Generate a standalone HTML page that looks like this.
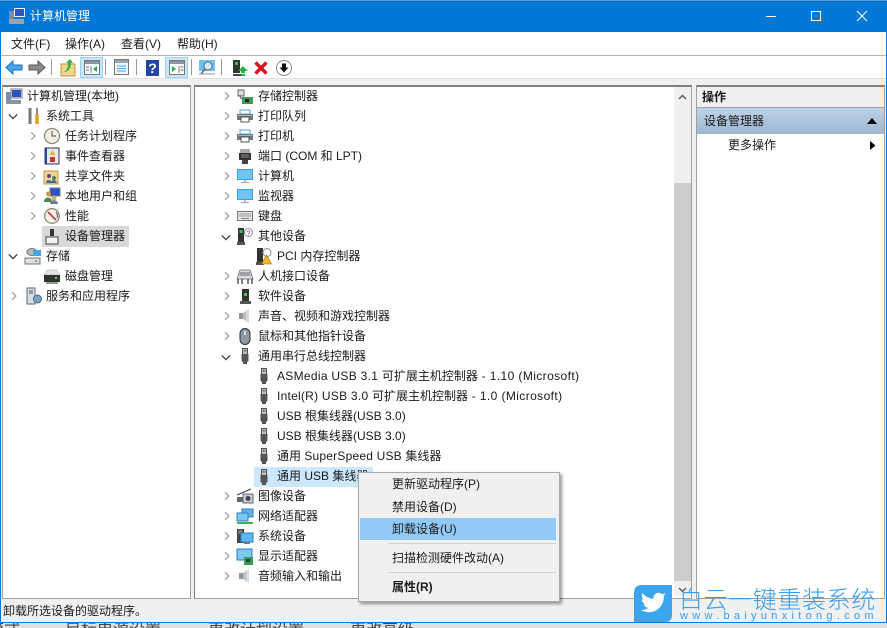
<!DOCTYPE html>
<html lang="zh"><head><meta charset="utf-8"><title>计算机管理</title>
<style>
html,body{margin:0;padding:0}
body{width:887px;height:628px;position:relative;overflow:hidden;background:#e0e0e0;font:12px/20px "Liberation Sans","Noto Sans CJK SC",sans-serif;color:#1a1a1a}
.a{position:absolute}
.t{position:absolute;white-space:nowrap;height:20px;line-height:20px}
.b{position:absolute;white-space:nowrap;height:20px;line-height:20px;top:-2px;font-size:16px;color:#444}
svg{position:absolute;overflow:visible}
</style></head><body>
<svg width="0" height="0" style="position:absolute"><defs>
<symbol id="r" viewBox="0 0 8 12"><path d="M1.500 1L6.500 6L1.500 11" fill="none" stroke="#a6a6a6" stroke-width="1.800"/></symbol>
<symbol id="d" viewBox="0 0 12 8"><path d="M1 1.500L6 6.500L11 1.500" fill="none" stroke="#404040" stroke-width="1.600"/></symbol>
<symbol id="usb" viewBox="0 0 16 16"><path d="M5.500 .5h5v6h-5z" fill="#bcbcbc" stroke="#505050"/><path d="M7 2h.8v1.500H7zM8.500 2h.8v1.500h-.8z" fill="#444"/><path d="M4.500 6h7v7l-1.500 1v2H6v-2l-1.500-1z" fill="#555"/></symbol>
<symbol id="mon" viewBox="0 0 16 16"><rect x="0" y="1" width="16" height="11" fill="#3aa0e4"/><rect x="1" y="2" width="14" height="9" fill="#74c4f2"/><path d="M4 14h8v1H4z" fill="#9aa6b0"/><path d="M7 12h2v2H7z" fill="#b5c0c8"/></symbol>
<symbol id="prn" viewBox="0 0 16 16"><rect x="3" y="2" width="10" height="4" fill="#fff" stroke="#4aa3dd"/><rect x="0" y="6" width="16" height="6" fill="#6f7881"/><rect x="1" y="7" width="14" height="1" fill="#aab2ba"/><rect x="4" y="9" width="8" height="5" fill="#fff" stroke="#555"/></symbol>
<symbol id="spk" viewBox="0 0 16 16"><path d="M2 5h4v6H2z" fill="#8f979b"/><path d="M6 5l6-4v14l-6-4z" fill="#b9bfc2"/><path d="M9 3l3-2v14l-3-2z" fill="#d6dadc"/></symbol>
</defs></svg>

<!-- window chrome -->
<div class="a" style="left:0;top:0;width:887px;height:1px;background:#5a9ad8"></div>
<div class="a" style="left:0;top:1px;width:887px;height:31px;background:#0078d7"></div>
<div class="a" style="left:0;top:32px;width:887px;height:591px;background:#f0f0f0"></div>
<div class="a" style="left:0;top:32px;width:1px;height:591px;background:#0078d7"></div>
<div class="a" style="left:886px;top:32px;width:1px;height:591px;background:#0078d7"></div>
<div class="a" style="left:1px;top:32px;width:885px;height:23px;background:#fff"></div>
<div class="a" style="left:1px;top:55px;width:885px;height:1px;background:#b4b4b4"></div>
<div class="a" style="left:1px;top:56px;width:885px;height:22px;background:#fff"></div>
<div class="a" style="left:1px;top:78px;width:885px;height:1px;background:#e0e0e0"></div>

<svg style="left:9px;top:8px" width="16" height="16" viewBox="0 0 16 16"><rect x="5" y="0" width="11" height="9" fill="#e8eef5"/><rect x="6" y="1" width="9" height="7" fill="#2a55c0"/><rect x="0" y="3" width="5" height="8" fill="#7b8ea3"/><rect x="0" y="11" width="15" height="5" fill="#9aa4ae"/></svg>
<div class="t" style="left:30px;top:6px;color:#fff">计算机管理</div>
<div class="a" style="left:766px;top:16px;width:10px;height:1px;background:#fff"></div>
<div class="a" style="left:811px;top:11px;width:8px;height:8px;border:1px solid #fff"></div>
<svg style="left:857px;top:11px" width="10" height="10" viewBox="0 0 10 10"><path d="M0 0L10 10M10 0L0 10" stroke="#fff" stroke-width="1"/></svg>

<div class="t" style="left:11px;top:34px">文件(F)</div>
<div class="t" style="left:65px;top:34px">操作(A)</div>
<div class="t" style="left:121px;top:34px">查看(V)</div>
<div class="t" style="left:177px;top:34px">帮助(H)</div>

<!-- toolbar -->
<div class="a" style="left:80px;top:57px;width:21px;height:19px;background:#cce8ff;border:1px solid #99d1ff"></div>
<div class="a" style="left:165px;top:57px;width:21px;height:19px;background:#cce8ff;border:1px solid #99d1ff"></div>
<div class="a" style="left:51px;top:59px;width:1px;height:16px;background:#999"></div>
<div class="a" style="left:105px;top:59px;width:1px;height:16px;background:#999"></div>
<div class="a" style="left:136px;top:59px;width:1px;height:16px;background:#999"></div>
<div class="a" style="left:191px;top:59px;width:1px;height:16px;background:#999"></div>
<div class="a" style="left:221px;top:59px;width:1px;height:16px;background:#999"></div>
<svg style="left:6px;top:60px" width="16" height="15" viewBox="0 0 16 15"><path d="M0 7.500L7 1v4h9v5H7v4z" fill="#4aa6ea" stroke="#1f6fb8"/></svg>
<svg style="left:29px;top:60px" width="16" height="15" viewBox="0 0 16 15"><path d="M16 7.500L9 1v4H0v5h9v4z" fill="#8c8c8c" stroke="#555"/></svg>
<svg style="left:61px;top:59px" width="14" height="17" viewBox="0 0 14 17"><path d="M0 5h14v12H0z" fill="#f0d78c" stroke="#b79a50"/><path d="M3 13C6 11 7 8 7 4H5l4-4 3 4h-2c0 5-2 8-6 9z" fill="#35b24a"/></svg>
<svg style="left:84px;top:60px" width="16" height="15" viewBox="0 0 16 15"><rect x=".5" y=".5" width="15" height="14" fill="#fff" stroke="#777"/><rect x="1" y="1" width="14" height="3" fill="#8a96a5"/><path d="M7 6v7" stroke="#777"/><path d="M2 7h3M2 10h3" stroke="#667"/><path d="M13 6v6l-4-3z" fill="#2fa84f"/></svg>
<svg style="left:114px;top:59px" width="15" height="16" viewBox="0 0 15 16"><rect x=".5" y=".5" width="14" height="15" fill="#f4f6f8" stroke="#777"/><rect x="1" y="1" width="13" height="3" fill="#9aa4b0"/><path d="M3 7h9M3 9.500h9M3 12h9" stroke="#5aa0d8"/></svg>
<div class="a" style="left:146px;top:60px;width:13px;height:16px;background:#2244a8;color:#fff;font:bold 14px/16px 'Liberation Sans',sans-serif;text-align:center">?</div>
<svg style="left:169px;top:60px" width="16" height="15" viewBox="0 0 16 15"><rect x=".5" y=".5" width="15" height="14" fill="#fff" stroke="#777"/><rect x="1" y="1" width="14" height="3" fill="#8a96a5"/><path d="M10 6v7" stroke="#777"/><path d="M11.500 7h3M11.500 10h3" stroke="#667"/><path d="M3 6v6l4-3z" fill="#2fa84f"/></svg>
<svg style="left:199px;top:60px" width="16" height="16" viewBox="0 0 16 16"><rect x="0" y="0" width="16" height="11" fill="#6cc0ee"/><circle cx="9" cy="6" r="4" fill="#d6eefa" stroke="#667"/><path d="M6 9L2 14" stroke="#667" stroke-width="1.500"/><path d="M0 14h16" stroke="#8a96a5"/></svg>
<svg style="left:233px;top:60px" width="15" height="16" viewBox="0 0 15 16"><rect x="0" y="0" width="7" height="13" fill="#333"/><rect x="2" y="2" width="3" height="3" fill="#39c24a"/><rect x="0" y="14" width="8" height="2" fill="#444"/><path d="M10 6l5 5h-3v2H8v-2H5z" fill="#28b04a"/><path d="M8 14h4v2H8z" fill="#28b04a"/></svg>
<svg style="left:254px;top:61px" width="14" height="14" viewBox="0 0 14 14"><path d="M1.500 1.500L12.500 12.500M12.500 1.500L1.500 12.500" stroke="#d9141e" stroke-width="3.400"/></svg>
<svg style="left:276px;top:60px" width="16" height="16" viewBox="0 0 16 16"><circle cx="8" cy="8" r="7.500" fill="#fff" stroke="#888"/><path d="M6 3.500h4v4h2.500L8 12.500 3.500 7.500H6z" fill="#111"/></svg>

<!-- panes -->
<div class="a" style="left:2px;top:85px;width:187px;height:511px;background:#fff;border:1px solid #a0a0a0;border-top:2px solid #7f7f7f"></div>
<div class="a" style="left:194px;top:85px;width:496px;height:511px;background:#fff;border:1px solid #a0a0a0;border-top:2px solid #7f7f7f;border-left:1px solid #7f7f7f"></div>
<div class="a" style="left:696px;top:85px;width:187px;height:511px;background:#fff;border:1px solid #a0a0a0;border-top:2px solid #7f7f7f"></div>

<!-- scrollbar -->
<div class="a" style="left:674px;top:87px;width:17px;height:509px;background:#f0f0f0"></div>
<div class="a" style="left:674px;top:183px;width:17px;height:398px;background:#cdcdcd"></div>
<svg style="left:678px;top:94px" width="9" height="6" viewBox="0 0 9 6"><path d="M1 5L4.500 1.500L8 5" fill="none" stroke="#606060" stroke-width="1.500"/></svg>
<svg style="left:678px;top:587px" width="9" height="6" viewBox="0 0 9 6"><path d="M1 1L4.500 4.500L8 1" fill="none" stroke="#606060" stroke-width="1.500"/></svg>

<!-- left tree -->
<svg style="left:6px;top:89px" width="16" height="16" viewBox="0 0 16 16"><rect x="5" y="0" width="11" height="9" fill="#e8eef5" stroke="#778"/><rect x="6" y="1" width="9" height="7" fill="#2a55c0"/><rect x="0" y="3" width="5" height="8" fill="#7b8ea3"/><rect x="0" y="11" width="15" height="4" fill="#8a94a0"/></svg>
<div class="t" style="left:27px;top:86px">计算机管理(本地)</div>
<svg style="left:8px;top:113px" width="10" height="7"><use href="#d"/></svg>
<svg style="left:27px;top:108px" width="14" height="16" viewBox="0 0 14 16"><path d="M3 0v6M3 6v10" stroke="#777" stroke-width="3"/><path d="M10 0v7" stroke="#888" stroke-width="2"/><path d="M10 6v10" stroke="#d9a020" stroke-width="3.500"/></svg>
<div class="t" style="left:46px;top:106px">系统工具</div>

<svg style="left:30px;top:131px" width="6" height="10"><use href="#r"/></svg>
<svg style="left:44px;top:128px" width="16" height="16" viewBox="0 0 16 16"><circle cx="8" cy="8" r="7.500" fill="#f2f0e4" stroke="#8a8a80" stroke-width="1.300"/><path d="M8 3v5h4" fill="none" stroke="#666" stroke-width="1.200"/></svg>
<div class="t" style="left:65px;top:126px">任务计划程序</div>

<svg style="left:30px;top:151px" width="6" height="10"><use href="#r"/></svg>
<svg style="left:45px;top:148px" width="14" height="16" viewBox="0 0 14 16"><rect x="0" y="0" width="14" height="16" fill="#e6e9ee" stroke="#335"/><path d="M0 0h2v16H0z" fill="#2a4a90"/><path d="M7.500 2l3 5h-6z" fill="#e8b820"/><rect x="5" y="9" width="5" height="5" fill="#c8343a"/></svg>
<div class="t" style="left:65px;top:146px">事件查看器</div>

<svg style="left:30px;top:171px" width="6" height="10"><use href="#r"/></svg>
<svg style="left:44px;top:168px" width="15" height="16" viewBox="0 0 15 16"><path d="M0 3h14v13H0z" fill="#efd693" stroke="#b89a50"/><circle cx="5" cy="8" r="2" fill="#647"/><circle cx="10" cy="10" r="2" fill="#486"/><path d="M2 15c0-4 5-4 6 0M7 15c0-4 5-4 6 0" fill="#4a6a88"/></svg>
<div class="t" style="left:65px;top:166px">共享文件夹</div>

<svg style="left:30px;top:191px" width="6" height="10"><use href="#r"/></svg>
<svg style="left:44px;top:188px" width="16" height="16" viewBox="0 0 16 16"><rect x="6" y="0" width="10" height="8" fill="#2a55c0" stroke="#778"/><circle cx="4.500" cy="6" r="2.500" fill="#c69a50"/><path d="M0 14c0-6 8-6 8 0z" fill="#4a8a4a"/><circle cx="10" cy="10" r="2.500" fill="#d8a870"/><path d="M6 16c0-5 8-5 8 0z" fill="#6a7f9a"/></svg>
<div class="t" style="left:65px;top:186px">本地用户和组</div>

<svg style="left:30px;top:211px" width="6" height="10"><use href="#r"/></svg>
<svg style="left:44px;top:208px" width="16" height="16" viewBox="0 0 16 16"><circle cx="8" cy="8" r="7.300" fill="#f6f3e8" stroke="#8a8a80" stroke-width="1.300"/><path d="M4 4L12 12" stroke="#c8343a" stroke-width="1.600"/><path d="M12 4A6 6 0 0 1 13 10" fill="none" stroke="#4a4a8a"/></svg>
<div class="t" style="left:65px;top:206px">性能</div>

<div class="a" style="left:42px;top:226px;width:87px;height:21px;background:#d9d9d9"></div>
<svg style="left:45px;top:229px" width="14" height="16" viewBox="0 0 14 16"><rect x="5" y="0" width="4" height="7" fill="#333"/><rect x="1" y="8" width="12" height="7" fill="#f4f4f4" stroke="#444"/></svg>
<div class="t" style="left:65px;top:226px">设备管理器</div>

<svg style="left:8px;top:253px" width="10" height="7"><use href="#d"/></svg>
<svg style="left:25px;top:248px" width="16" height="17" viewBox="0 0 16 17"><ellipse cx="7" cy="4" rx="5" ry="3.500" fill="#b8bcbc" stroke="#777"/><rect x="8" y="2" width="8" height="6" fill="#42a5e0"/><rect x="0" y="10" width="15" height="6" fill="#ddd" stroke="#777"/><circle cx="11" cy="13" r="1" fill="#39c24a"/></svg>
<div class="t" style="left:46px;top:246px">存储</div>

<svg style="left:44px;top:270px" width="16" height="14" viewBox="0 0 16 14"><path d="M3 0h10l3 5H0z" fill="#e4e4e4" stroke="#aaa" stroke-width=".5"/><rect x="0" y="5" width="16" height="7" fill="#333"/><rect x="11" y="7" width="2" height="2" fill="#39e24a"/><rect x="2" y="12" width="12" height="2" fill="#999"/></svg>
<div class="t" style="left:65px;top:266px">磁盘管理</div>

<svg style="left:11px;top:291px" width="6" height="10"><use href="#r"/></svg>
<svg style="left:27px;top:288px" width="15" height="16" viewBox="0 0 15 16"><rect x="0" y="0" width="8" height="16" fill="#d8dde2" stroke="#667"/><path d="M2 3h4M2 5h4" stroke="#556"/><circle cx="10.500" cy="11" r="4" fill="#7ba4c8" stroke="#4a6a8a"/></svg>
<div class="t" style="left:46px;top:286px">服务和应用程序</div>

<!-- middle tree -->
<svg style="left:224px;top:91px" width="6" height="10"><use href="#r"/></svg>
<svg style="left:237px;top:89px" width="16" height="16" viewBox="0 0 16 16"><path d="M1 1h6v6H1z" fill="#ddd" stroke="#666"/><path d="M3 6c0 4 3 5 6 4" fill="none" stroke="#555"/><rect x="5" y="8" width="11" height="7" fill="#3f9a5a"/><rect x="8" y="10" width="4" height="3" fill="#222"/></svg>
<div class="t" style="left:258px;top:86px">存储控制器</div>

<svg style="left:224px;top:111px" width="6" height="10"><use href="#r"/></svg>
<svg style="left:237px;top:108px" width="16" height="16"><use href="#prn"/></svg>
<div class="t" style="left:258px;top:106px">打印队列</div>

<svg style="left:224px;top:131px" width="6" height="10"><use href="#r"/></svg>
<svg style="left:237px;top:128px" width="16" height="16"><use href="#prn"/></svg>
<div class="t" style="left:258px;top:126px">打印机</div>

<svg style="left:224px;top:151px" width="6" height="10"><use href="#r"/></svg>
<svg style="left:239px;top:149px" width="12" height="15" viewBox="0 0 12 15"><rect x="1" y="0" width="10" height="4" fill="#aaa"/><rect x="0" y="4" width="12" height="7" fill="#333"/><path d="M2 6h8M2 8h8" stroke="#888"/><rect x="3" y="11" width="6" height="4" fill="#444"/></svg>
<div class="t" style="left:258px;top:146px">端口 (COM 和 LPT)</div>

<svg style="left:224px;top:171px" width="6" height="10"><use href="#r"/></svg>
<svg style="left:237px;top:168px" width="16" height="16"><use href="#mon"/></svg>
<div class="t" style="left:258px;top:166px">计算机</div>

<svg style="left:224px;top:191px" width="6" height="10"><use href="#r"/></svg>
<svg style="left:237px;top:188px" width="16" height="16"><use href="#mon"/></svg>
<div class="t" style="left:258px;top:186px">监视器</div>

<svg style="left:224px;top:211px" width="6" height="10"><use href="#r"/></svg>
<svg style="left:237px;top:211px" width="16" height="10" viewBox="0 0 16 10"><rect x=".5" y=".5" width="15" height="9" fill="#e4e6e8" stroke="#777"/><path d="M2 3h12M2 5h12" stroke="#999"/><path d="M4 7.500h8" stroke="#888"/></svg>
<div class="t" style="left:258px;top:206px">键盘</div>

<svg style="left:221px;top:234px" width="10" height="7"><use href="#d"/></svg>
<svg style="left:237px;top:228px" width="16" height="17" viewBox="0 0 16 17"><rect x="1" y="0" width="6" height="14" fill="#333"/><rect x="2.500" y="2" width="3" height="3" fill="#39c24a"/><rect x="0" y="14" width="8" height="3" fill="#555"/><circle cx="11.500" cy="4.500" r="4" fill="#fff" stroke="#88a"/><text x="11.500" y="7.500" font-size="7" text-anchor="middle" fill="#557" font-family="Liberation Sans">?</text></svg>
<div class="t" style="left:258px;top:226px">其他设备</div>

<svg style="left:256px;top:248px" width="16" height="17" viewBox="0 0 16 17"><rect x="1" y="0" width="6" height="14" fill="#333"/><rect x="0" y="14" width="8" height="3" fill="#555"/><circle cx="11" cy="4.500" r="4" fill="#fff" stroke="#88a"/><path d="M10.500 7l5 9h-10z" fill="#f2b824" stroke="#8a6a10" stroke-width=".6"/></svg>
<div class="t" style="left:277px;top:246px">PCI 内存控制器</div>

<svg style="left:224px;top:271px" width="6" height="10"><use href="#r"/></svg>
<svg style="left:237px;top:269px" width="16" height="16" viewBox="0 0 16 16"><path d="M3 1h10l3 9H0z" fill="#d8dce0" stroke="#667" stroke-width=".8"/><path d="M3 4h10M2.500 6h11" stroke="#667"/><path d="M1 10v5M5 10v5M11 10v5M15 10v5" stroke="#555" stroke-width="1.500"/></svg>
<div class="t" style="left:258px;top:266px">人机接口设备</div>

<svg style="left:224px;top:291px" width="6" height="10"><use href="#r"/></svg>
<svg style="left:240px;top:289px" width="11" height="15" viewBox="0 0 11 15"><rect x="2" y="0" width="7" height="12" fill="#333"/><rect x="4" y="4" width="3" height="3" fill="#39d24a"/><rect x="0" y="12" width="11" height="3" fill="#555"/></svg>
<div class="t" style="left:258px;top:286px">软件设备</div>

<svg style="left:224px;top:311px" width="6" height="10"><use href="#r"/></svg>
<svg style="left:237px;top:308px" width="16" height="16"><use href="#spk"/></svg>
<div class="t" style="left:258px;top:306px">声音、视频和游戏控制器</div>

<svg style="left:224px;top:331px" width="6" height="10"><use href="#r"/></svg>
<svg style="left:239px;top:328px" width="12" height="17" viewBox="0 0 12 17"><rect x="1" y=".5" width="10" height="16" rx="5" fill="#8e99a3" stroke="#333"/><path d="M6 3v4" stroke="#eee" stroke-width="1.500"/></svg>
<div class="t" style="left:258px;top:326px">鼠标和其他指针设备</div>

<svg style="left:221px;top:354px" width="10" height="7"><use href="#d"/></svg>
<svg style="left:237px;top:348px" width="16" height="16"><use href="#usb"/></svg>
<div class="t" style="left:258px;top:346px">通用串行总线控制器</div>

<svg style="left:256px;top:368px" width="16" height="16"><use href="#usb"/></svg>
<div class="t" style="left:277px;top:366px"><span style="letter-spacing:.3px">ASMedia USB 3.1 </span>可扩展主机控制器<span style="letter-spacing:.4px"> - 1.10 (Microsoft)</span></div>
<svg style="left:256px;top:388px" width="16" height="16"><use href="#usb"/></svg>
<div class="t" style="left:277px;top:386px"><span style="letter-spacing:.25px">Intel(R) USB 3.0 </span>可扩展主机控制器<span style="letter-spacing:.4px"> - 1.0 (Microsoft)</span></div>
<svg style="left:256px;top:408px" width="16" height="16"><use href="#usb"/></svg>
<div class="t" style="left:277px;top:406px">USB 根集线器(USB 3.0)</div>
<svg style="left:256px;top:428px" width="16" height="16"><use href="#usb"/></svg>
<div class="t" style="left:277px;top:426px">USB 根集线器(USB 3.0)</div>
<svg style="left:256px;top:448px" width="16" height="16"><use href="#usb"/></svg>
<div class="t" style="left:277px;top:446px">通用 <span style="letter-spacing:.2px">SuperSpeed USB </span>集线器</div>

<div class="a" style="left:254px;top:467px;width:119px;height:20px;background:#cce8ff"></div>
<svg style="left:256px;top:469px" width="16" height="16"><use href="#usb"/></svg>
<div class="t" style="left:277px;top:466px">通用 USB 集线器</div>

<svg style="left:224px;top:491px" width="6" height="10"><use href="#r"/></svg>
<svg style="left:237px;top:489px" width="16" height="15" viewBox="0 0 16 15"><path d="M0 6L14 0" stroke="#444" stroke-width="1.200"/><path d="M0 8h6v5H0z" fill="#666"/><rect x="6" y="5" width="10" height="9" fill="#c8ccd0" stroke="#667"/><circle cx="11" cy="9.500" r="2.500" fill="#445"/></svg>
<div class="t" style="left:258px;top:486px">图像设备</div>

<svg style="left:224px;top:511px" width="6" height="10"><use href="#r"/></svg>
<svg style="left:237px;top:509px" width="16" height="16" viewBox="0 0 16 16"><rect x="5" y="0" width="11" height="8" fill="#5cb3e8" stroke="#2f80c0"/><rect x="0" y="4" width="11" height="8" fill="#7cc8f2" stroke="#2f80c0"/><path d="M0 14h16" stroke="#3ab54a" stroke-width="2"/></svg>
<div class="t" style="left:258px;top:506px">网络适配器</div>

<svg style="left:224px;top:531px" width="6" height="10"><use href="#r"/></svg>
<svg style="left:237px;top:529px" width="16" height="15" viewBox="0 0 16 15"><rect x="0" y="0" width="7" height="14" fill="#444"/><path d="M1.500 2h4M1.500 4h4" stroke="#bbb"/><rect x="4" y="4" width="12" height="9" fill="#5cb8ee" stroke="#2f80c0"/><path d="M7 14h6" stroke="#778" stroke-width="2"/></svg>
<div class="t" style="left:258px;top:526px">系统设备</div>

<svg style="left:224px;top:551px" width="6" height="10"><use href="#r"/></svg>
<svg style="left:237px;top:549px" width="16" height="16" viewBox="0 0 16 16"><rect x="0" y="0" width="15" height="11" fill="#7cc8f2" stroke="#2f80c0"/><rect x="7" y="8" width="9" height="8" fill="#3f9a5a"/><rect x="9" y="10" width="4" height="3" fill="#1a4a2a"/></svg>
<div class="t" style="left:258px;top:546px">显示适配器</div>

<svg style="left:224px;top:571px" width="6" height="10"><use href="#r"/></svg>
<svg style="left:237px;top:568px" width="16" height="16"><use href="#spk"/></svg>
<div class="t" style="left:258px;top:566px">音频输入和输出</div>

<!-- action pane -->
<div class="a" style="left:697px;top:87px;width:187px;height:20px;background:#f0f0f0"></div>
<div class="a" style="left:697px;top:107px;width:187px;height:1px;background:#a0a0a0"></div>
<div class="t" style="left:702px;top:87px;font-weight:bold">操作</div>
<div class="a" style="left:697px;top:108px;width:187px;height:26px;background:linear-gradient(#bdd3e8,#9db6d2)"></div>
<div class="t" style="left:704px;top:111px">设备管理器</div>
<svg style="left:867px;top:118px" width="10" height="6" viewBox="0 0 10 6"><path d="M0 6L5 0L10 6z" fill="#000"/></svg>
<div class="t" style="left:728px;top:135px">更多操作</div>
<svg style="left:870px;top:141px" width="6" height="9" viewBox="0 0 6 9"><path d="M0 0L5.500 4.500L0 9z" fill="#000"/></svg>

<!-- status bar -->
<div class="t" style="left:3px;top:601px">卸载所选设备的驱动程序。</div>
<div class="a" style="left:0;top:622px;width:887px;height:1px;background:#0078d7"></div>
<div class="a" style="left:0;top:623px;width:887px;height:5px;background:#e0e0e0;overflow:hidden">
<div class="b" style="left:-12px">模式</div>
<div class="b" style="left:36px">--</div>
<div class="b" style="left:65px">目标电源设置</div>
<div class="b" style="left:178px">--</div>
<div class="b" style="left:208px">更改计划设置</div>
<div class="b" style="left:320px">--</div>
<div class="b" style="left:350px">更改高级</div>
</div>

<!-- watermark -->
<svg style="left:634px;top:585px" width="38" height="38" viewBox="0 0 38 38"><path d="M8 0H38V30Q38 37 31 37H0V8Q0 0 8 0z" fill="#3da5f0"/><path d="M31 12c-1 .6-2 .8-3 1 1-.6 2-1.600 2.300-3-1 .6-2 1-3.200 1.300a5 5 0 0 0-8.500 4.500C14 15.500 10 13.500 7.500 10c-1.300 2.300-.7 5 1.500 6.600-.8 0-1.600-.2-2.300-.6 0 2.500 1.800 4.600 4.200 5.100-.8.200-1.500.2-2.300.1.700 2 2.600 3.500 4.800 3.500-2.200 1.700-5 2.500-7.600 2.200 2.300 1.400 5 2.300 8 2.300 9.500 0 15-8 15-15v-.7c1-.7 2-1.700 2.700-2z" fill="#fff" transform="translate(1 -2)"/></svg>
<div class="t" style="left:679px;top:584px;height:28px;line-height:28px;font-size:24px;letter-spacing:.6px;color:#3d9ce8;font-family:'Noto Sans CJK SC',sans-serif;font-weight:300">白云一键重装系统</div>
<div class="t" style="left:680px;top:609px;height:14px;line-height:14px;font-size:11px;letter-spacing:4.300px;color:#3d9ce8">www.baiyunxitong.com</div>

<!-- context menu -->
<div class="a" style="left:358px;top:472px;width:200px;height:128px;background:#f0f0f0;border:1px solid #a8a8a8;box-shadow:2px 2px 3px rgba(0,0,0,.4)"></div>
<div class="a" style="left:360px;top:518px;width:196px;height:22px;background:#91c9f7"></div>
<div class="a" style="left:388px;top:543px;width:168px;height:1px;background:#d0d0d0"></div>
<div class="a" style="left:388px;top:572px;width:168px;height:1px;background:#d0d0d0"></div>
<div class="t" style="left:392px;top:474px">更新驱动程序(P)</div>
<div class="t" style="left:392px;top:497px">禁用设备(D)</div>
<div class="t" style="left:392px;top:519px">卸载设备(U)</div>
<div class="t" style="left:392px;top:548px">扫描检测硬件改动(A)</div>
<div class="t" style="left:392px;top:577px;font-weight:bold">属性(R)</div>
</body></html>
